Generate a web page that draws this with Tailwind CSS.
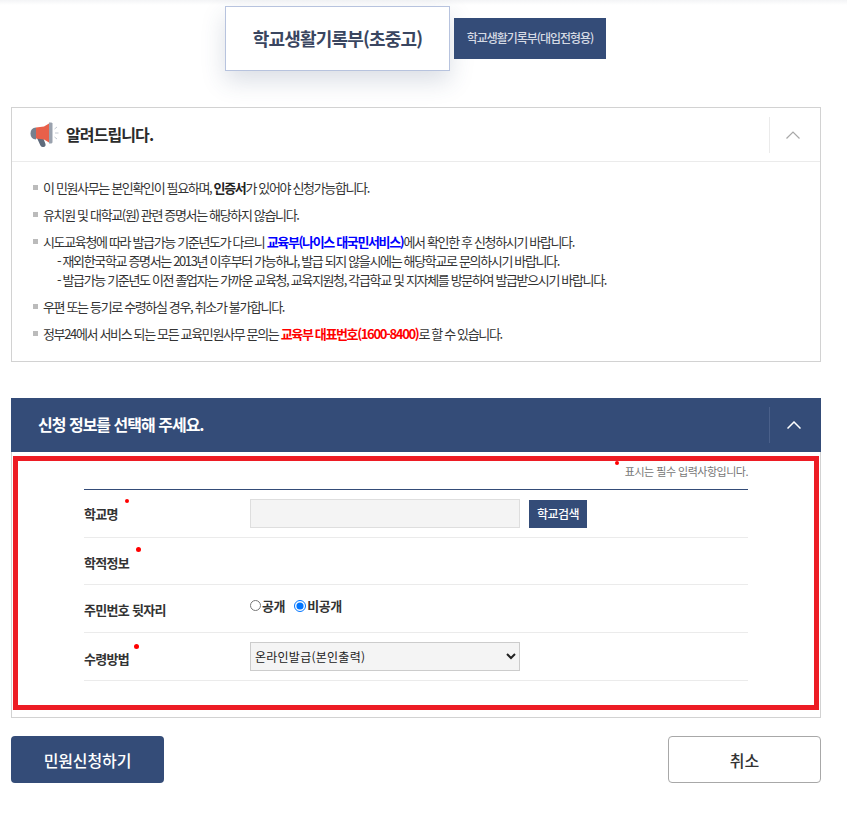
<!DOCTYPE html>
<html lang="ko">
  <head>
    <meta charset="UTF-8" />
    <meta name="viewport" content="width=device-width, initial-scale=1.0" />
    <title>학교생활기록부</title>
    <script src="https://cdn.jsdelivr.net/npm/@tailwindcss/browser@4"></script>
  </head>
  <body class="bg-white bg-[linear-gradient(#f3f4f6,#fff_5px)] text-[#333] font-['Noto_Sans_CJK_KR','Noto_Sans',sans-serif] w-[847px] h-[826px] overflow-hidden">
    <div class="w-[810px] ml-[11px]">
      <!-- Tabs -->
      <div class="flex items-center h-[77px] pl-[214px] gap-[4px]">
        <div class="w-[225px] h-[65px] bg-white border border-[#b7c3de] shadow-[0_10px_24px_rgba(50,70,110,0.18)] flex items-center justify-center text-[18px] font-bold text-[#3a4660] tracking-[-0.8px]">학교생활기록부(초중고)</div>
        <div class="w-[152px] h-[41px] bg-[#344c78] flex items-center justify-center text-[12px] font-medium text-[#d5dae4] tracking-[-1.05px] -mt-[1px]">학교생활기록부(대입전형용)</div>
      </div>

      <!-- Notice -->
      <section class="mt-[30px] h-[255px] border border-[#d2d2d2]">
        <div class="h-[54px] border-b border-[#ebebeb] flex items-center pl-[18px] pr-[20px]">
          <svg class="w-[29px] h-[26px] shrink-0" viewBox="0 0 29 26">
            <path d="M7 16 l6 -.5 l2.500 6.500 q.5 2.500 -2 3 q-2.500 .5 -3.200 -1.700 z" fill="#5f6b7c" />
            <path d="M6 5.500 q-5.500 .5 -5.500 6 q0 5.500 5.500 6 z" fill="#77808e" />
            <path d="M6 5.500 l8 -1 l5 -3 v19 l-5 -3 l-8 -1 z" fill="#e8604a" />
            <path d="M19 .5 h2.500 l1 1 v19 l-1 1 h-2.500 z" fill="#9aa2ae" />
            <path d="M24.500 7 l2.500 -2 M25 11 h3.500 M24.500 15 l2.500 2" stroke="#c2c8d0" stroke-width="1" fill="none" />
          </svg>
          <h2 class="ml-[7px] text-[16px] font-bold text-[#2b2b2b] tracking-[-0.9px] leading-none -mt-[1px]">알려드립니다.</h2>
          <div class="ml-auto w-px h-[36px] bg-[#ebebeb]"></div>
          <svg class="ml-[16px] w-[14px] h-[8px]" viewBox="0 0 14 8"><path d="M.5 7.500 L7 1 L13.500 7.500" stroke="#a8a8a8" stroke-width="1.200" fill="none" /></svg>
        </div>
        <ul class="pt-[16px] pl-[21px] text-[13px] leading-[19px] text-[#333] tracking-[-1.35px]">
          <li class="flex mb-[8px]"><span class="w-[5px] h-[5px] bg-[#bbb] mt-[7px] mr-[5px] shrink-0"></span><p>이 민원사무는 본인확인이 필요하며, <b class="font-bold text-[#222]">인증서</b>가 있어야 신청가능합니다.</p></li>
          <li class="flex mb-[8px]"><span class="w-[5px] h-[5px] bg-[#bbb] mt-[7px] mr-[5px] shrink-0"></span><p>유치원 및 대학교(원) 관련 증명서는 해당하지 않습니다.</p></li>
          <li class="flex mb-[8px]"><span class="w-[5px] h-[5px] bg-[#bbb] mt-[7px] mr-[5px] shrink-0"></span>
            <div>
              <p>시도교육청에 따라 발급가능 기준년도가 다르니 <b class="font-bold text-[#0000ff]">교육부(나이스 대국민서비스)</b>에서 확인한 후 신청하시기 바랍니다.</p>
              <p class="pl-[14px]">- 재외한국학교 증명서는 2013년 이후부터 가능하나, 발급 되지 않을시에는 해당학교로 문의하시기 바랍니다.</p>
              <p class="pl-[14px]">- 발급가능 기준년도 이전 졸업자는 가까운 교육청, 교육지원청, 각급학교 및 지자체를 방문하여 발급받으시기 바랍니다.</p>
            </div>
          </li>
          <li class="flex mb-[8px]"><span class="w-[5px] h-[5px] bg-[#bbb] mt-[7px] mr-[5px] shrink-0"></span><p>우편 또는 등기로 수령하실 경우, 취소가 불가합니다.</p></li>
          <li class="flex"><span class="w-[5px] h-[5px] bg-[#bbb] mt-[7px] mr-[5px] shrink-0"></span><p>정부24에서 서비스 되는 모든 교육민원사무 문의는 <b class="font-bold text-[#ff0000]">교육부 대표번호(1600-8400)</b>로 할 수 있습니다.</p></li>
        </ul>
      </section>

      <!-- Application form -->
      <section class="mt-[36px]">
        <div class="h-[54px] bg-[#344c78] flex items-center pl-[27px] pr-[20px]">
          <h2 class="text-[16px] font-bold text-white tracking-[-1px] -mt-[2px]">신청 정보를 선택해 주세요.</h2>
          <div class="ml-auto w-px h-[36px] bg-[#4a608a]"></div>
          <svg class="ml-[17px] w-[14px] h-[8px]" viewBox="0 0 14 8"><path d="M.5 7.500 L7 1 L13.500 7.500" stroke="#fff" stroke-width="1.500" fill="none" /></svg>
        </div>
        <div class="h-[266px] border border-t-0 border-[#d2d2d2] px-px pt-[4px]">
          <div class="h-[254px] border-[5px] border-[#ed1c24] pl-[66px] pr-[66px]">
            <div class="relative h-[29px] border-b border-[#344c78] flex justify-end items-start pt-[2px] text-[11px] leading-[16px] text-[#777] tracking-[-0.5px]">
              <span class="absolute right-[129px] top-[0px] w-[4px] h-[4px] rounded-full bg-[#ff0000]"></span>
              표시는 필수 입력사항입니다.
            </div>
            <div class="flex items-center h-[48px] border-b border-[#ebebeb]">
              <div class="relative w-[166px] text-[13px] font-bold text-[#333] tracking-[-0.7px] mt-[1px]">학교명<span class="absolute left-[41px] -top-[5px] w-[4px] h-[4px] rounded-full bg-[#ff0000]"></span></div>
              <input type="text" class="w-[270px] h-[29px] bg-[#f4f4f4] border border-[#dedede]" />
              <button class="ml-[9px] w-[58px] h-[28px] bg-[#344c78] text-white text-[12px] font-medium tracking-[-0.5px]">학교검색</button>
            </div>
            <div class="flex items-center h-[47px] border-b border-[#ebebeb]">
              <div class="relative w-[166px] text-[13px] font-bold text-[#333] tracking-[-0.7px] mt-[3px]">학적정보<span class="absolute left-[52px] -top-[6px] w-[5px] h-[5px] rounded-full bg-[#ff0000]"></span></div>
            </div>
            <div class="flex items-center h-[48px] border-b border-[#ebebeb]">
              <div class="w-[166px] text-[13px] font-bold text-[#333] tracking-[-0.7px] mt-[2px]">주민번호 뒷자리</div>
              <div class="flex items-center -mt-[6px] text-[13px] font-bold text-[#333] tracking-[-0.4px]">
                <input type="radio" name="open" class="w-[11px] h-[11px] m-0 accent-[#0075ff]" /><span class="ml-px">공개</span>
                <input type="radio" name="open" checked class="w-[12px] h-[12px] ml-[9px] accent-[#0075ff]" /><span class="ml-px">비공개</span>
              </div>
            </div>
            <div class="flex items-center h-[48px] border-b border-[#ebebeb]">
              <div class="relative w-[166px] text-[13px] font-bold text-[#333] tracking-[-0.7px] mt-[4px]">수령방법<span class="absolute left-[50px] -top-[5px] w-[5px] h-[5px] rounded-full bg-[#ff0000]"></span></div>
              <select class="w-[270px] h-[29px] bg-[#f4f4f4] border border-[#ccc] text-[12px] text-[#222] tracking-[0.25px]">
                <option>온라인발급(본인출력)</option>
              </select>
            </div>
          </div>
        </div>
      </section>

      <!-- Actions -->
      <div class="mt-[18px] flex justify-between">
        <button class="w-[153px] h-[47px] rounded-[4px] bg-[#344c78] text-white text-[16px] font-medium tracking-[-0.1px]">민원신청하기</button>
        <button class="w-[153px] h-[47px] rounded-[4px] bg-white border border-[#a8a8a8] text-[#333] text-[16px] font-medium">취소</button>
      </div>
    </div>
  </body>
</html>
